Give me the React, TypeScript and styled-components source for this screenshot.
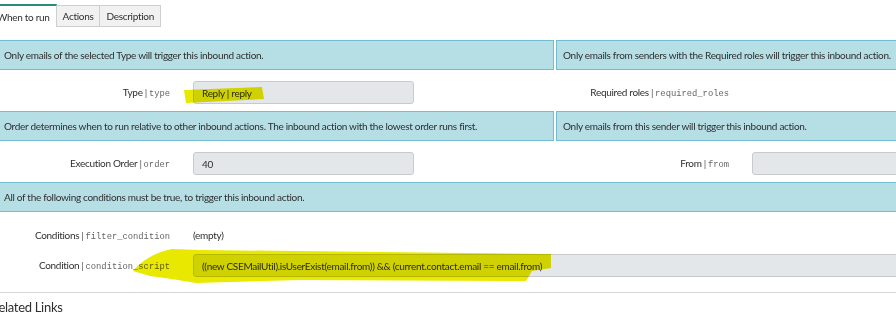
import React from "react";
import styled, { createGlobalStyle } from "styled-components";

const sans = `Lato, "Liberation Sans", Arial, sans-serif`;
const mono = `"Liberation Mono", "DejaVu Sans Mono", monospace`;
const textSize = "10px";
const tight = "-0.3px";

const GlobalStyle = createGlobalStyle`
  html, body {
    margin: 0;
    padding: 0;
    background: #fff;
  }
  body {
    font-family: ${sans};
    color: #333;
  }
`;

const Frame = styled.div`
  position: relative;
  width: 896px;
  height: 314px;
  overflow: hidden;
  isolation: isolate;
`;

const Page = styled.div`
  width: 1114px;
  margin-left: -3px;
  padding-top: 4px;
`;

const TabList = styled.div`
  display: flex;
  align-items: flex-end;
  height: 23px;
  margin-left: -6px;
`;

const Tab = styled.div<{ $active?: boolean }>`
  box-sizing: border-box;
  height: ${(p) => (p.$active ? 23 : 22)}px;
  padding: 0 6px;
  display: flex;
  align-items: center;
  font-size: ${textSize};
  letter-spacing: ${tight};
  color: #2f2f2f;
  background: ${(p) => (p.$active ? "#fff" : "#f1f1f1")};
  border: 1px solid #cfcfcf;
  border-left: none;
  border-top: ${(p) => (p.$active ? "2px solid #2b8a78" : "1px solid #cfcfcf")};
  border-bottom: ${(p) => (p.$active ? "none" : "1px solid #cfcfcf")};
`;

const Columns = styled.div`
  display: grid;
  grid-template-columns: 557px 557px;
  column-gap: 2px;
  margin-top: 13px;
`;

const Info = styled.div`
  box-sizing: border-box;
  height: 30px;
  display: flex;
  align-items: center;
  padding: 0 6px;
  background: #b5dee5;
  border: 1px solid #72bed0;
  font-size: ${textSize};
  letter-spacing: ${tight};
  color: #2f2f2f;
  white-space: nowrap;
  overflow: hidden;
`;

const FieldRow = styled.div<{ $pad?: string }>`
  display: grid;
  grid-template-columns: 173px 1fr;
  grid-template-rows: 23px;
  column-gap: 23px;
  align-items: center;
  padding: ${(p) => p.$pad ?? "11px 0 7px"};
`;

const Label = styled.div`
  height: 23px;
  text-align: right;
  font-size: ${textSize};
  letter-spacing: ${tight};
  line-height: 23px;
  color: #2f2f2f;
  white-space: nowrap;
`;

const Pipe = styled.span`
  color: #555;
  margin: 0 2px;
`;

const Name = styled.span`
  font-family: ${mono};
  font-size: 8.8px;
  letter-spacing: 0;
  line-height: 1;
  color: #666;
`;

const Input = styled.div<{ $width?: number }>`
  box-sizing: border-box;
  width: ${(p) => (p.$width ? `${p.$width}px` : "auto")};
  height: 23px;
  padding: 0 8px;
  display: flex;
  align-items: center;
  background: #e4e7ea;
  border: 1px solid #c8cacc;
  border-radius: 3px;
  font-size: ${textSize};
  letter-spacing: ${tight};
  color: #2f2f2f;
  white-space: nowrap;
`;

const Plain = styled.div`
  height: 23px;
  font-size: ${textSize};
  letter-spacing: ${tight};
  line-height: 23px;
  color: #2f2f2f;
`;

const Divider = styled.hr`
  margin: 0;
  border: none;
  border-top: 1px solid #d6d6d6;
`;

const Heading = styled.div`
  margin-left: -6px;
  padding-top: 6px;
  font-size: 13px;
  letter-spacing: -0.3px;
  line-height: 16px;
  color: #2f2f2f;
`;

const Marker = styled.svg`
  position: absolute;
  left: 0;
  top: 0;
  pointer-events: none;
  mix-blend-mode: multiply;
`;

const FieldLabel: React.FC<{ label: string; name: string }> = ({ label, name }) => (
  <Label>
    {label}
    <Pipe>|</Pipe>
    <Name>{name}</Name>
  </Label>
);

const App: React.FC = () => {
  return (
    <Frame>
      <GlobalStyle />
      <Page>
        <TabList>
          <Tab $active>When to run</Tab>
          <Tab>Actions</Tab>
          <Tab>Description</Tab>
        </TabList>

        <Columns>
          <Info>Only emails of the selected Type will trigger this inbound action.</Info>
          <Info>Only emails from senders with the Required roles will trigger this inbound action.</Info>
          <FieldRow>
            <FieldLabel label="Type" name="type" />
            <Input $width={221}>Reply | reply</Input>
          </FieldRow>
          <FieldRow>
            <FieldLabel label="Required roles" name="required_roles" />
            <div />
          </FieldRow>

          <Info>
            Order determines when to run relative to other inbound actions. The inbound action with the
            lowest order runs first.
          </Info>
          <Info>Only emails from this sender will trigger this inbound action.</Info>
          <FieldRow>
            <FieldLabel label="Execution Order" name="order" />
            <Input $width={221}>40</Input>
          </FieldRow>
          <FieldRow>
            <FieldLabel label="From" name="from" />
            <Input $width={221} />
          </FieldRow>
        </Columns>

        <Info>All of the following conditions must be true, to trigger this inbound action.</Info>
        <FieldRow $pad="12px 0 0">
          <FieldLabel label="Conditions" name="filter_condition" />
          <Plain>(empty)</Plain>
        </FieldRow>
        <FieldRow $pad="7px 0 15px">
          <FieldLabel label="Condition" name="condition_script" />
          <Input>((new CSEMailUtil).isUserExist(email.from)) &amp;&amp; (current.contact.email == email.from)</Input>
        </FieldRow>
        <Divider />
        <Heading>Related Links</Heading>
      </Page>

      <Marker width={896} height={314} viewBox="0 0 896 314">
        <polygon points="184,90 262,87 264,99 186,103" fill="#e8e800" />
        <path
          d="M133 271 C140 262 155 252 172 249 L200 250 L551 254 L551 268 L532 271 L526 281 L300 280 L196 283 L172 279 L150 276 Z"
          fill="#e8e800"
        />
      </Marker>
    </Frame>
  );
};

export default App;
